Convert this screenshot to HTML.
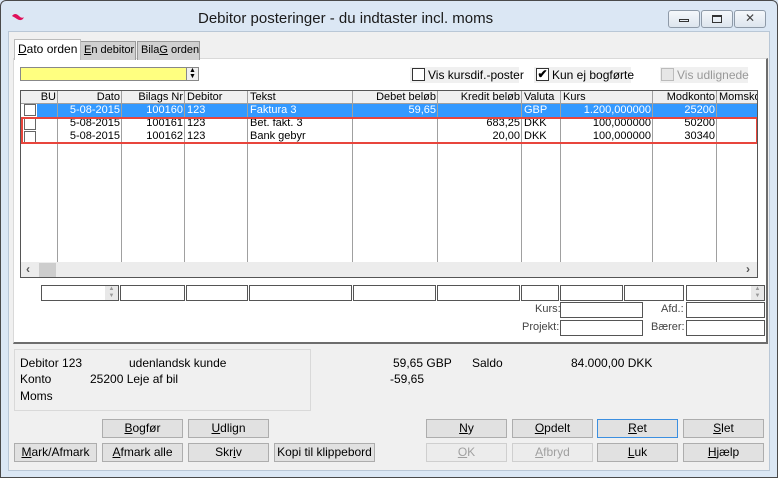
<!DOCTYPE html><html><head><meta charset="utf-8"><style>
*{box-sizing:border-box;margin:0;padding:0}
body{width:778px;height:478px;overflow:hidden;background:#dbe7f4;font-family:"Liberation Sans",sans-serif;font-size:11px;color:#000;position:relative}
.a{position:absolute}
.frame{left:0;top:0;width:778px;height:478px;border:1px solid #4a4a4a;border-radius:6px 6px 0 0;background:#dbe7f4}
.client{left:8px;top:31px;width:762px;height:440px;background:#f0f0f0;border:1px solid #b9c7d6}
.tb{width:32px;height:18px;border:1px solid #8e9aa8;border-radius:3px;background:linear-gradient(#f5f8fb,#dde5ee)}
.panel{left:13px;top:58px;width:755px;height:286px;background:#fff;border-right:2px solid #6d6d6d;border-bottom:2px solid #6d6d6d;border-top:1px solid #d9d9d9;border-left:1px solid #d9d9d9}
.tab{height:19px;border:1px solid #999;border-bottom:none;padding:2px 3px;background:#d0d0d0;white-space:nowrap}
.cb{width:13px;height:13px;border:1px solid #333;background:#fff}
.grid{left:20px;top:90px;width:738px;height:188px;border:1px solid #555;background:#fff;overflow:hidden}
.vl{top:0;width:1px;height:171px;background:#a0a0a0}
.row{left:0;width:737px;height:13px;line-height:13px;white-space:nowrap}
.c{position:absolute;top:0;height:13px;padding:0 2px;overflow:hidden}
.r{text-align:right}
.inp{height:16px;border:1px solid #555;background:#fff}
.n{font-family:"Liberation Sans Narrow","Liberation Sans",sans-serif}
.btn{height:19px;border:1px solid #adadad;background:#e1e1e1;text-align:center;line-height:17px;font-family:"Liberation Sans Narrow","Liberation Sans",sans-serif;font-size:12px}
.dis{color:#a0a0a0;border-color:#cfcfcf;background:#ececec}
u{text-decoration:underline}
</style></head><body>
<div class="a frame"></div>
<svg class="a" style="left:11px;top:12px" width="14" height="10"><path d="M1 4 Q4 0 8 4 Q11 7 13 5 Q11 10 6 7 Q3 5 1 4Z" fill="#e0105a"/></svg>
<div class="a" style="left:198px;top:10px;font-size:15px;color:#1a1a1a">Debitor posteringer - du indtaster incl. moms</div>
<div class="a tb" style="left:668px;top:10px"><div class="a" style="left:10px;top:8px;width:10px;height:3px;border:1px solid #333"></div></div>
<div class="a tb" style="left:701px;top:10px"><div class="a" style="left:10px;top:4px;width:10px;height:8px;border:1px solid #333;border-top-width:2px"></div></div>
<div class="a tb" style="left:734px;top:10px;font-size:12px;text-align:center;line-height:15px;color:#444">✕</div>
<div class="a client"></div>
<div class="a panel"></div>
<div class="a tab" style="left:14px;top:39px;height:21px;background:#fff;border-color:#bbb;font-size:12px;z-index:2"><u>D</u>ato orden</div>
<div class="a tab" style="left:80px;top:41px;width:56px"><u>E</u>n debitor</div>
<div class="a tab" style="left:137px;top:41px;width:63px">Bila<u>G</u> orden</div>
<div class="a" style="left:20px;top:67px;width:167px;height:14px;background:#ffff80;border:1px solid #888"></div>
<div class="a" style="left:186px;top:67px;width:13px;height:14px;border:1px solid #888;background:#f0f0f0;font-size:7px;line-height:6px;text-align:center">▲<br>▼</div>
<div class="a" style="left:410px;top:67px;width:109px;height:16px;background:#f0f0f0"></div>
<div class="a cb" style="left:412px;top:68px"></div><div class="a" style="left:428px;top:68px;font-size:12px">Vis kursdif.-poster</div>
<div class="a" style="left:534px;top:67px;width:97px;height:16px;background:#f0f0f0"></div>
<div class="a cb" style="left:536px;top:68px;font-size:12px;line-height:11px;text-align:center;font-weight:bold">✔</div><div class="a" style="left:552px;top:68px;font-size:12px">Kun ej bogførte</div>
<div class="a" style="left:660px;top:67px;width:88px;height:16px;background:#f0f0f0"></div>
<div class="a cb" style="left:661px;top:68px;border-color:#bbb;background:#e6e6e6"></div><div class="a" style="left:677px;top:68px;font-size:12px;color:#999">Vis udlignede</div>
<div class="a grid">
<div class="a row" style="top:0;background:#f0f0f0;border-bottom:1px solid #a0a0a0;height:13px">
<span class="c r" style="left:0;width:37px">BU</span><span class="c r" style="left:37px;width:64px">Dato</span><span class="c r" style="left:101px;width:63px">Bilags Nr</span><span class="c" style="left:164px">Debitor</span><span class="c" style="left:227px">Tekst</span><span class="c r" style="left:332px;width:85px">Debet beløb</span><span class="c r" style="left:417px;width:84px">Kredit beløb</span><span class="c" style="left:501px">Valuta</span><span class="c" style="left:540px">Kurs</span><span class="c r" style="left:632px;width:64px">Modkonto</span><span class="c" style="left:696px">Momsko</span></div>
<div class="a row" style="top:13px;background:#3399ff;left:16px;width:721px"></div>
<div class="a vl" style="left:36px"></div><div class="a vl" style="left:100px"></div><div class="a vl" style="left:163px"></div><div class="a vl" style="left:226px"></div><div class="a vl" style="left:331px"></div><div class="a vl" style="left:416px"></div><div class="a vl" style="left:500px"></div><div class="a vl" style="left:539px"></div><div class="a vl" style="left:631px"></div><div class="a vl" style="left:695px"></div>
<div class="a row" style="top:13px;color:#fff">
<span class="c r" style="left:37px;width:64px">5-08-2015</span><span class="c r" style="left:101px;width:63px">100160</span><span class="c" style="left:164px">123</span><span class="c" style="left:227px">Faktura 3</span><span class="c r" style="left:332px;width:85px">59,65</span><span class="c" style="left:501px">GBP</span><span class="c r" style="left:540px;width:92px">1.200,000000</span><span class="c r" style="left:632px;width:64px">25200</span></div>
<div class="a row" style="top:26px">
<span class="c r" style="left:37px;width:64px">5-08-2015</span><span class="c r" style="left:101px;width:63px">100161</span><span class="c" style="left:164px">123</span><span class="c" style="left:227px">Bet. fakt. 3</span><span class="c r" style="left:417px;width:84px">683,25</span><span class="c" style="left:501px">DKK</span><span class="c r" style="left:540px;width:92px">100,000000</span><span class="c r" style="left:632px;width:64px">50200</span></div>
<div class="a row" style="top:39px">
<span class="c r" style="left:37px;width:64px">5-08-2015</span><span class="c r" style="left:101px;width:63px">100162</span><span class="c" style="left:164px">123</span><span class="c" style="left:227px">Bank gebyr</span><span class="c r" style="left:417px;width:84px">20,00</span><span class="c" style="left:501px">DKK</span><span class="c r" style="left:540px;width:92px">100,000000</span><span class="c r" style="left:632px;width:64px">30340</span></div>
<div class="a cb" style="left:3px;top:13px;width:12px;height:12px;border-color:#666"></div>
<div class="a cb" style="left:3px;top:27px;width:12px;height:12px;border-color:#666"></div>
<div class="a cb" style="left:3px;top:40px;width:12px;height:12px;border-color:#666"></div>
<div class="a" style="left:0;top:26px;width:737px;height:27px;border:2px solid #e8453c"></div>
<div class="a" style="left:0;top:171px;width:737px;height:16px;background:#ececec"></div>
<div class="a" style="left:18px;top:172px;width:17px;height:14px;background:#cdcdcd"></div>
<div class="a" style="left:5px;top:171px;font-size:12px;font-weight:bold;color:#555">‹</div>
<div class="a" style="left:725px;top:171px;font-size:12px;font-weight:bold;color:#555">›</div>
</div>
<div class="a inp" style="left:41px;top:285px;width:78px"></div>
<div class="a" style="left:105px;top:286px;width:13px;height:14px;background:#e8e8e8;font-size:6px;line-height:7px;text-align:center;color:#999">▲<br>▼</div>
<div class="a inp" style="left:120px;top:285px;width:65px"></div>
<div class="a inp" style="left:186px;top:285px;width:62px"></div>
<div class="a inp" style="left:249px;top:285px;width:103px"></div>
<div class="a inp" style="left:353px;top:285px;width:83px"></div>
<div class="a inp" style="left:437px;top:285px;width:83px"></div>
<div class="a inp" style="left:521px;top:285px;width:38px"></div>
<div class="a inp" style="left:560px;top:285px;width:63px"></div>
<div class="a inp" style="left:624px;top:285px;width:60px"></div>
<div class="a inp" style="left:686px;top:285px;width:79px"></div>
<div class="a" style="left:751px;top:286px;width:13px;height:14px;background:#e8e8e8;font-size:6px;line-height:7px;text-align:center;color:#999">▲<br>▼</div>
<div class="a n" style="left:535px;top:303px;color:#444">Kurs:</div><div class="a inp" style="left:560px;top:302px;width:83px"></div>
<div class="a n" style="left:661px;top:303px;color:#444">Afd.:</div><div class="a inp" style="left:686px;top:302px;width:79px"></div>
<div class="a n" style="left:522px;top:321px;color:#444">Projekt:</div><div class="a inp" style="left:560px;top:320px;width:83px"></div>
<div class="a n" style="left:651px;top:321px;color:#444">Bærer:</div><div class="a inp" style="left:686px;top:320px;width:79px"></div>
<div class="a" style="left:14px;top:349px;width:297px;height:62px;border:1px solid #d9d9d9"></div>
<div class="a n" style="left:20px;top:356px;font-size:12px">Debitor 123</div>
<div class="a n" style="left:129px;top:356px;font-size:12px">udenlandsk kunde</div>
<div class="a n" style="left:393px;top:356px;font-size:12px">59,65 GBP</div>
<div class="a n" style="left:20px;top:372px;font-size:12px">Konto</div>
<div class="a n" style="left:90px;top:372px;font-size:12px">25200 Leje af bil</div>
<div class="a n" style="left:390px;top:372px;font-size:12px">-59,65</div>
<div class="a n" style="left:20px;top:389px;font-size:12px">Moms</div>
<div class="a n" style="left:472px;top:356px;font-size:12px">Saldo</div>
<div class="a n" style="left:571px;top:356px;font-size:12px">84.000,00 DKK</div>
<div class="a btn" style="left:102px;top:419px;width:81px"><u>B</u>ogfør</div>
<div class="a btn" style="left:188px;top:419px;width:81px"><u>U</u>dlign</div>
<div class="a btn" style="left:14px;top:443px;width:83px"><u>M</u>ark/Afmark</div>
<div class="a btn" style="left:102px;top:443px;width:81px"><u>A</u>fmark alle</div>
<div class="a btn" style="left:188px;top:443px;width:81px">Skr<u>i</u>v</div>
<div class="a btn" style="left:274px;top:443px;width:101px">Kopi til klippebord</div>
<div class="a btn" style="left:426px;top:419px;width:81px"><u>N</u>y</div>
<div class="a btn" style="left:512px;top:419px;width:81px"><u>O</u>pdelt</div>
<div class="a btn" style="left:597px;top:419px;width:81px;border-color:#3c8fe0"><u>R</u>et</div>
<div class="a btn" style="left:683px;top:419px;width:81px"><u>S</u>let</div>
<div class="a btn dis" style="left:426px;top:443px;width:81px"><u>O</u>K</div>
<div class="a btn dis" style="left:512px;top:443px;width:81px"><u>A</u>fbryd</div>
<div class="a btn" style="left:597px;top:443px;width:81px"><u>L</u>uk</div>
<div class="a btn" style="left:683px;top:443px;width:81px"><u>H</u>jælp</div>
</body></html>
